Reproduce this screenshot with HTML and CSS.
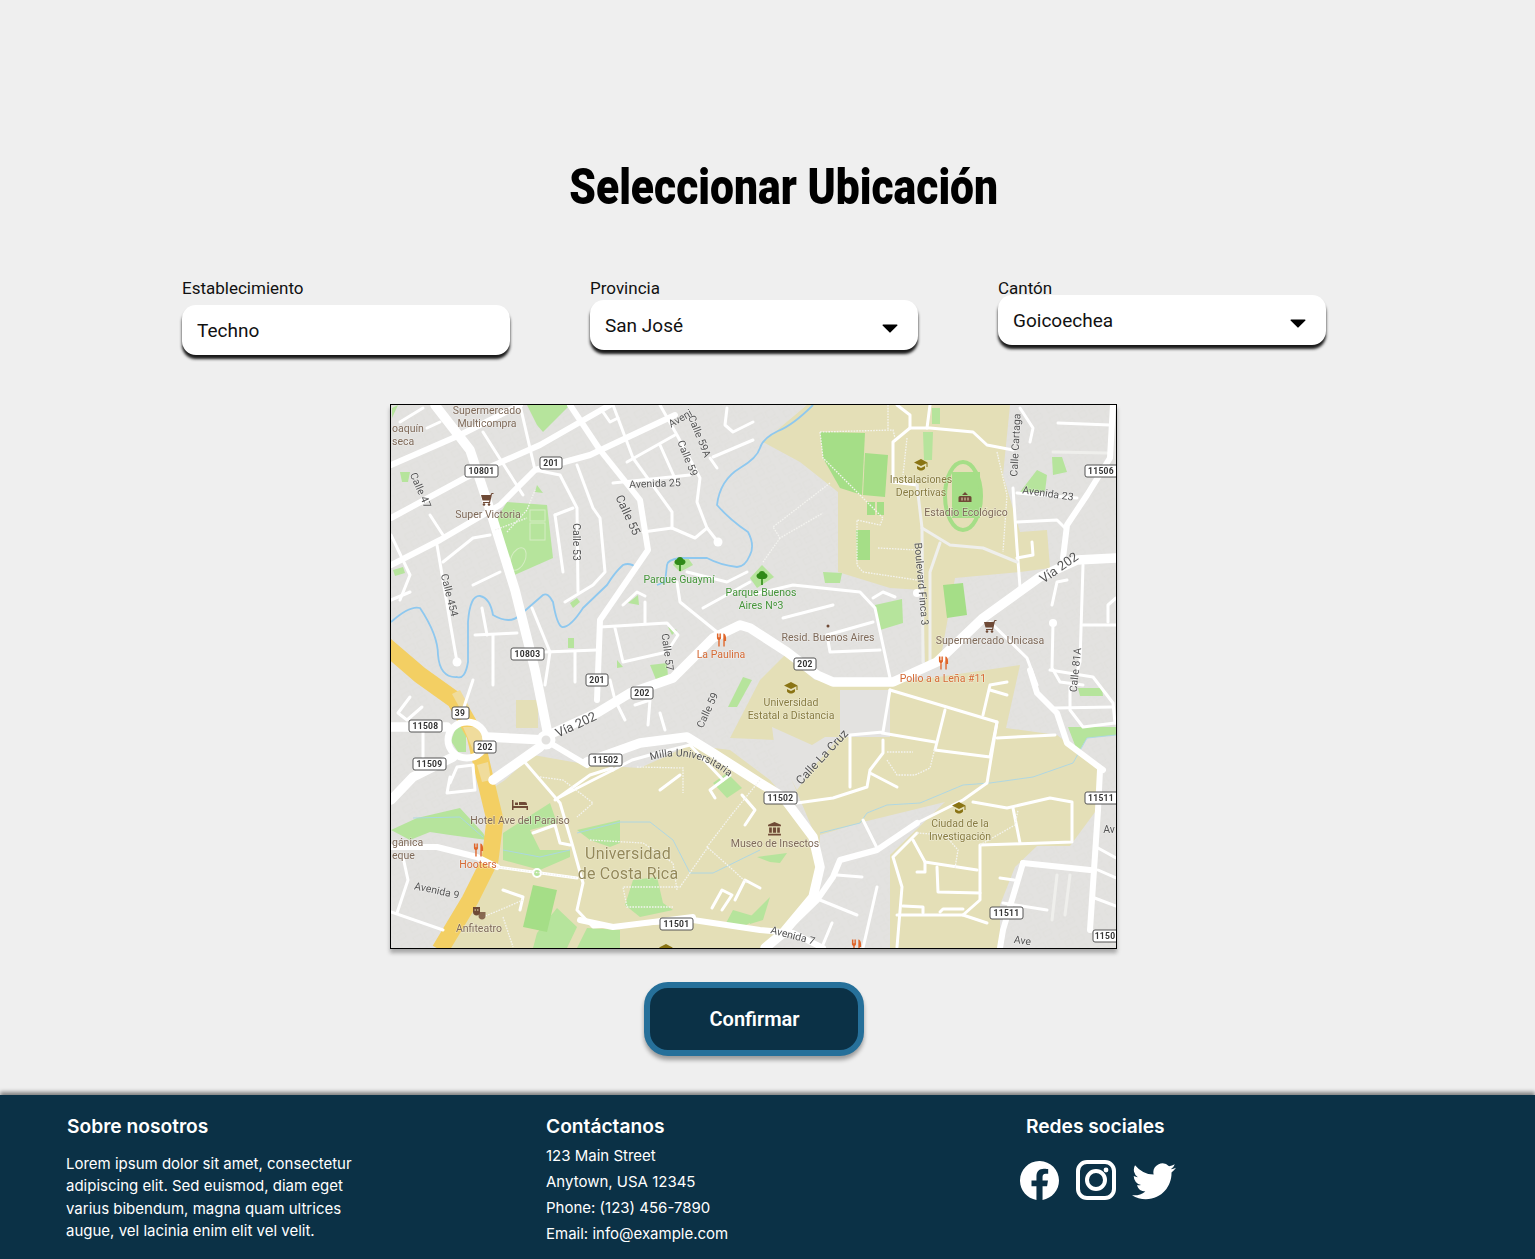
FILE: index.html
```html
<!DOCTYPE html>
<html lang="es">
<head>
    <meta charset="UTF-8">
    <meta name="viewport" content="width=device-width, initial-scale=1.0">
    <title>Seleccionar Ubicación</title>
    <link rel="stylesheet" href="styles.css">
</head>
<body>

    <main class="page">
        <h1 class="page-title"><span>Seleccionar Ubicación</span></h1>

        <div class="fields">
            <div class="field">
                <label class="field-label gap-lg" for="establecimiento">Establecimiento</label>
                <input class="box" id="establecimiento" type="text" value="Techno">
            </div>
            <div class="field">
                <label class="field-label gap-md" for="provincia">Provincia</label>
                <div class="select-wrap">
                    <select class="box" id="provincia"><option>San José</option></select>
                    <svg class="arrow" viewBox="0 0 16 9"><path d="M1 0.5h14a.6.6 0 0 1 .4 1L8.6 8.3a.8.8 0 0 1-1.2 0L.6 1.5A.6.6 0 0 1 1 .5z"/></svg>
                </div>
            </div>
            <div class="field">
                <label class="field-label gap-sm" for="canton">Cantón</label>
                <div class="select-wrap">
                    <select class="box" id="canton"><option>Goicoechea</option></select>
                    <svg class="arrow" viewBox="0 0 16 9"><path d="M1 0.5h14a.6.6 0 0 1 .4 1L8.6 8.3a.8.8 0 0 1-1.2 0L.6 1.5A.6.6 0 0 1 1 .5z"/></svg>
                </div>
            </div>
        </div>

        <div class="stage">
            <div class="map">
                <svg class="map-svg" viewBox="391 405 725 543" width="725" height="543">
                    <defs>
                        <pattern id="blocks" width="26" height="20" patternUnits="userSpaceOnUse" patternTransform="rotate(-28)">
                            <rect x="2" y="2" width="9" height="6" class="bld"/>
                            <rect x="14" y="3" width="8" height="7" class="bld"/>
                            <rect x="4" y="11" width="7" height="6" class="bld"/>
                            <rect x="15" y="13" width="8" height="5" class="bld"/>
                        </pattern>
                        <symbol id="cart" viewBox="0 0 14 14"><path d="M13.5 1h-2l-1 2H1l1.500 5.500h7L9 10H3v1h7l2-9h1.500z"/><circle cx="4" cy="12.500" r="1.300"/><circle cx="9" cy="12.500" r="1.300"/></symbol>
                        <symbol id="tree" viewBox="0 0 14 14"><path d="M7 0C5 0 4 1.200 4 2.200 2.500 2.500 1.500 3.600 1.500 5c0 1.500 1.500 3 3.500 3h1.200v6h1.600V8H9c2 0 3.500-1.500 3.500-3 0-1.400-1-2.500-2.500-2.800C10 1.200 9 0 7 0z"/></symbol>
                        <symbol id="fork" viewBox="0 0 12 14"><path d="M1 0v4.500C1 6 2 6.800 2.500 7v7h1.500V7C4.500 6.800 5.500 6 5.500 4.500V0h-1v4h-.6V0h-1v4h-.6V0zM8 0c1.500 0 3 2 3 5v3H9.500v6H8z"/></symbol>
                        <symbol id="cap" viewBox="0 0 14 14"><path d="M7 1L0 4.500 7 8l5.500-2.800V9h1V4.500zM3 8v2.500C4 12 5.500 12.500 7 12.500s3-.5 4-2V8L7 10z"/></symbol>
                        <symbol id="stadium" viewBox="0 0 14 14"><path d="M7 1l3 3H4zM2 5h10a1.500 1.500 0 0 1 1.500 1.500V11H.5V6.500A1.500 1.500 0 0 1 2 5z"/><path d="M4 6.500v3M7 6.500v3M10 6.500v3" stroke="#e4dfb7"/></symbol>
                        <symbol id="museum" viewBox="0 0 14 14"><path d="M7 1L1 3.500V5h12V3.500zM2 6h2.500v5H2zM5.500 6h3v5h-3zM9.500 6H12v5H9.500zM1 12h12v1.500H1z"/></symbol>
                        <symbol id="bed" viewBox="0 0 16 12"><path d="M0 1h1.500v6H16v4h-1.500V9h-13v2H0zM3 3.500h3V6H3zM7 3h6a2 2 0 0 1 2 2v1H7z"/></symbol>
                        <symbol id="masks" viewBox="0 0 14 14"><path d="M1 1h7v5c0 2-1.500 3.500-3.500 3.500S1 8 1 6zM2.500 3.500v1h1.500v-1zM5 3.500v1h1.500v-1z"/><path d="M7 6h6.500v4C13.500 12 12 13.500 10 13.500S6.500 12 6.500 10z" fill-opacity=".8"/></symbol>
                    </defs>

                    <rect x="391" y="405" width="725" height="543" class="land"/>
                    <rect x="391" y="405" width="725" height="543" fill="url(#blocks)"/>

                    <!-- zonas beige -->
                    <g class="campus">
                        <polygon points="807,405 1010,405 1003,475 1020,532 1047,530 1050,568 1020,572 955,578 940,662 925,662 922,590 890,588 838,572 838,492 800,462 763,442"/>
                        <polygon points="730,738 760,680 785,655 815,680 890,684 1020,665 1006,728 1057,735 1100,768 1098,808 1070,846 1037,846 1015,867 1000,905 1000,948 890,948 890,855 945,802 863,822 820,835 817,900 783,933 770,948 440,948 490,860 497,820 490,790 505,780 533,755 590,765 640,768 690,745 730,750 770,780 800,815 815,835 775,740"/>
                        <polygon points="840,690 890,690 890,737 840,737" class="gray-patch"/>
                        <polygon points="772,727 812,745 825,737 840,737 815,765 797,790 775,750" class="gray-patch"/>
                        <rect x="516" y="700" width="22" height="28"/>
                    </g>

                    <!-- parques -->
                    <g class="park">
                        <polygon points="507,502 547,505 553,558 510,577 493,525"/>
                        <polygon points="527,405 570,405 560,415 543,432 537,425"/>
                        <polygon points="923,432 933,432 932,460 924,460"/>
                        <polygon points="932,408 940,408 940,424 932,424"/>
                        <polygon points="823,572 842,573 840,583 825,583"/>
                        <polygon points="1052,457 1062,457 1067,472 1053,475"/>
                        <polygon points="1020,492 1037,470 1047,475 1045,492"/>
                        <polygon points="875,605 902,599 903,623 880,630"/>
                        <polygon points="762,565 774,577 757,588 750,578"/>
                        <polygon points="391,830 417,818 460,808 483,833 487,840 450,835 430,832 410,840"/>
                        <polygon points="503,833 550,803 557,823 530,830 540,850 570,850 570,857 540,870 503,860"/>
                        <polygon points="577,830 620,820 620,843 610,847 590,840"/>
                        <polygon points="557,908 577,927 567,948 533,948 537,933"/>
                        <polygon points="587,928 620,930 620,948 577,948"/>
                        <polygon points="713,783 727,773 742,788 727,798"/>
                        <polygon points="633,880 657,877 663,903 673,910 640,917 625,905"/>
                        <polygon points="733,910 760,918 740,928 725,925"/>
                        <polygon points="743,677 752,680 737,707 728,707"/>
                        <polygon points="1068,727 1116,727 1116,735 1087,738 1078,753"/>
                        <polygon points="1078,688 1102,688 1103,696 1080,696"/>
                        <polygon points="757,857 787,853 780,863 770,862"/>
                        <polygon points="750,917 770,897 763,920 750,924"/>
                        <polygon points="400,472 410,472 408,482 402,482"/>
                        <polygon points="393,570 403,567 405,573 395,576"/>
                        <polygon points="537,485 543,493 535,492"/>
                        <rect x="568" y="638" width="6" height="10"/>
                        <polygon points="570,603 577,598 580,602 573,608"/>
                        <polygon points="628,603 638,595 639,605"/>
                        <polygon points="650,665 667,663 668,678 657,682"/>
                        <polygon points="617,660 623,667 617,668"/>
                        <polygon points="668,627 677,630 672,635"/>
                        <polygon points="677,558 688,558 693,565 680,572 673,565"/>
                        <polygon points="392,408 398,405 392,418"/>
                        <polygon points="456,727 466,727 466,752 458,752 451,741"/>
                    </g>
                    <g class="pitch">
                        <polygon points="820,432 865,433 862,495 840,488 823,458"/>
                        <polygon points="865,453 888,455 885,497 863,495"/>
                        <rect x="867" y="502" width="8" height="13"/>
                        <rect x="877" y="502" width="7" height="13"/>
                        <polygon points="856,530 870,530 870,560 857,560"/>
                        <polygon points="943,585 963,583 967,615 947,618"/>
                        <rect x="952" y="472" width="28" height="46"/>
                        <polygon points="533,885 557,890 547,932 523,927"/>
                    </g>
                    <ellipse cx="963" cy="496" rx="18" ry="34" class="track"/>
                    <g class="pitch-line">
                        <rect x="530" y="510" width="15" height="11"/>
                        <rect x="530" y="523" width="15" height="17"/>
                        <ellipse cx="518" cy="559" rx="7" ry="12" transform="rotate(25 518 559)"/>
                    </g>

                    <!-- rios -->
                    <g class="river">
                        <path d="M813 405Q793 425 778 431Q763 438 760 448Q757 458 740 468Q720 480 717 505Q730 520 748 532Q755 545 750 555Q745 567 737 567Q720 565 707 558L680 558Q667 560 667 565L665 582L657 585"/>
                        <path d="M637 568Q630 562 623 565Q615 572 607 585L583 608Q570 628 562 627Q557 625 553 602Q548 592 543 595L520 615Q510 625 493 615Q490 598 480 596Q470 595 468 622L468 662Q465 680 457 677Q440 678 438 655Q438 635 420 608Q410 605 391 622"/>
                    </g>
                    <g class="stream">
                        <polyline points="413,818 460,817 483,837"/>
                        <polyline points="503,850 540,857 570,850"/>
                        <polyline points="577,833 620,822 650,822 673,840 690,873 713,873 760,850"/>
                        <polyline points="820,833 860,823 867,813 887,805 920,803 963,785 990,783 1033,777 1073,763 1087,738 1116,735"/>
                    </g>

                    <!-- autopista -->
                    <polyline class="highway" points="385,645 420,675 455,700 475,735 483,770 495,820 490,860 470,900 440,950"/>
                    <polygon class="highway-light" points="452,694 460,690 470,708 462,712"/>
                    <polygon class="highway-light" points="463,727 482,727 490,752 476,757"/>
                    <polygon class="highway-light" points="477,765 488,762 491,780 482,782"/>

                    <!-- caminos secundarios -->
                    <g class="road-s">
                        <polyline points="520,405 535,470 560,475 577,508 578,592"/>
                        <polyline points="577,465 593,508 600,518 605,572 593,585 565,602"/>
                        <polyline points="555,515 573,508"/>
                        <polyline points="555,515 563,572"/>
                        <polyline points="443,562 473,538 490,535"/>
                        <polyline points="473,585 500,572"/>
                        <polyline points="437,545 450,622 457,662"/>
                        <polyline points="430,515 443,535"/>
                        <polyline points="391,535 410,575 400,600"/>
                        <polyline points="410,592 391,600"/>
                        <polyline points="483,432 523,495"/>
                        <polyline points="400,422 423,408"/>
                        <polyline points="427,428 440,422"/>
                        <polyline points="475,635 517,633"/>
                        <polyline points="482,608 487,635"/>
                        <polyline points="493,635 493,685"/>
                        <polyline points="532,608 550,652 545,685"/>
                        <polyline points="545,652 597,650"/>
                        <polyline points="575,652 575,682"/>
                        <polyline points="600,627 667,623 678,635 667,652 623,662 615,628"/>
                        <polyline points="645,602 645,623"/>
                        <polyline points="623,605 637,592 645,596"/>
                        <polyline points="643,532 672,528 695,538 707,528 718,542"/>
                        <polyline points="672,528 672,512 633,458 613,405"/>
                        <polyline points="707,528 697,502 700,478 677,435 660,405"/>
                        <polyline points="613,483 690,475"/>
                        <polyline points="627,462 675,435"/>
                        <polyline points="713,457 753,440"/>
                        <polyline points="710,458 717,468"/>
                        <polyline points="660,445 677,483"/>
                        <polyline points="727,408 725,425 733,432 753,422"/>
                        <polyline points="603,412 610,422 618,418"/>
                        <polyline points="677,582 680,602 717,632"/>
                        <polyline points="703,608 750,582"/>
                        <polyline points="687,572 727,582 747,572"/>
                        <polyline points="783,618 833,605"/>
                        <polyline points="750,595 793,585 860,592 875,608 890,678"/>
                        <polyline points="873,598 883,592 895,597"/>
                        <polyline points="827,635 830,652 880,650"/>
                        <polyline points="827,635 873,622"/>
                        <polyline points="897,405 910,415 910,428 930,428 973,432 987,445 1013,450"/>
                        <polyline points="910,428 893,442 893,482 917,485"/>
                        <polyline points="930,405 927,428"/>
                        <polyline points="1013,488 1017,548 1020,587"/>
                        <polyline points="1017,522 1057,520 1065,528"/>
                        <polyline points="1017,558 1033,555 1032,542"/>
                        <polyline points="1017,493 1077,498"/>
                        <polyline points="1020,408 1033,428 1030,442"/>
                        <polyline points="1058,423 1110,425"/>
                        <polyline points="1053,623 1052,668 1060,682 1083,685"/>
                        <polyline points="1083,625 1116,625"/>
                        <polyline points="1108,622 1108,605 1116,598"/>
                        <polyline points="1052,605 1057,582 1067,580"/>
                        <polyline points="1083,565 1080,662 1073,685"/>
                        <polyline points="1070,687 1070,710 1083,727 1115,723"/>
                        <polyline points="1050,670 1093,677 1113,703 1115,723"/>
                        <polyline points="1055,708 1113,707"/>
                        <polyline points="990,622 1027,658 1037,685"/>
                        <polyline points="890,690 997,722 990,757 935,750 945,710"/>
                        <polyline points="997,722 987,783 963,800 917,823"/>
                        <polyline points="882,733 935,742"/>
                        <polyline points="890,690 883,732 850,735 850,787"/>
                        <polyline points="997,738 1055,735"/>
                        <polyline points="983,715 990,685 1007,682"/>
                        <polyline points="990,690 1007,695"/>
                        <polyline points="883,740 883,753 870,770 867,787 833,798 797,803"/>
                        <polyline points="870,773 897,787"/>
                        <polyline points="973,802 1007,808 1050,798 1072,802 1072,842 980,845 980,900 963,915 897,915"/>
                        <polyline points="1013,808 1020,843"/>
                        <polyline points="917,833 893,857 902,887 897,947"/>
                        <polyline points="963,915 987,923"/>
                        <polyline points="937,867 938,892 980,893"/>
                        <polyline points="925,862 977,870"/>
                        <polyline points="913,840 925,862 925,872 917,872"/>
                        <polyline points="940,912 943,909 963,909"/>
                        <polyline points="903,906 923,907 923,913"/>
                        <polyline points="863,820 878,850"/>
                        <polyline points="837,875 862,877"/>
                        <polyline points="820,900 857,915"/>
                        <polyline points="877,887 863,948"/>
                        <polyline points="832,923 822,947"/>
                        <polyline points="1098,848 1116,858"/>
                        <polyline points="1098,870 1116,878"/>
                        <polyline points="1092,897 1116,906"/>
                        <polyline points="1003,903 1047,910"/>
                        <polyline points="1000,878 1014,880"/>
                        <polyline points="410,697 398,713 407,720 422,707"/>
                        <polyline points="423,730 423,757"/>
                        <polyline points="450,777 447,793 475,790 473,765 457,767 450,783"/>
                        <polyline points="473,680 463,710"/>
                        <polyline points="403,857 408,880 397,913"/>
                        <polyline points="391,912 443,930"/>
                        <polyline points="523,760 560,803 573,847 583,883 577,910 593,927 660,923"/>
                        <polyline points="560,797 593,780 613,770"/>
                        <polyline points="555,800 590,775 612,768"/>
                        <polyline points="533,833 555,825 560,843 570,845"/>
                        <polyline points="503,890 523,897 520,910"/>
                        <polyline points="497,867 577,878"/>
                        <polyline points="613,770 632,760 650,755 690,745"/>
                        <polyline points="610,680 615,700 625,720"/>
                        <polyline points="635,705 650,700 648,725"/>
                        <polyline points="660,713 665,730"/>
                        <polyline points="680,775 660,790"/>
                        <polyline points="715,798 710,790 730,775"/>
                        <polyline points="723,780 690,745"/>
                        <polyline points="742,795 755,810 745,825"/>
                        <polyline points="735,900 745,880 760,888"/>
                        <polyline points="712,908 722,890 732,895 722,910"/>
                    </g>
                    <g class="road-soft">
                        <polyline points="917,485 922,528 923,662"/>
                        <polyline points="922,528 950,545 983,548 1017,562"/>
                        <polyline points="940,543 930,572 930,662"/>
                        <polyline points="1053,452 1107,453"/>
                        <polyline points="1057,875 1052,920"/>
                        <polyline points="1070,875 1065,915"/>
                    </g>
                    <circle cx="718" cy="542" r="4.500" class="dot"/>
                    <circle cx="457" cy="662" r="4.500" class="dot"/>
                    <circle cx="917" cy="593" r="4" class="dot"/>
                    <circle cx="1053" cy="623" r="4" class="dot"/>
                    <circle cx="537" cy="873" r="4" class="ring-sm"/>

                    <!-- caminos principales -->
                    <g class="road-m">
                        <polyline points="391,465 460,435 520,405"/>
                        <polyline points="391,518 465,478 540,445 610,405"/>
                        <polyline points="391,565 440,540 500,505 535,470 590,455 675,415"/>
                        <polyline points="570,405 600,450 640,500 648,550 600,620 597,700"/>
                        <polyline points="1113,405 1110,458 1087,495 1067,525 1063,558"/>
                        <polyline points="1100,770 1098,810 1090,930"/>
                        <polyline points="1023,863 1090,870"/>
                        <polyline points="1023,863 1003,930 1000,948"/>
                        <polyline points="1030,670 1037,693 1057,713 1067,743 1103,770"/>
                        <polyline points="917,823 877,850 840,860 833,877 817,900 783,933"/>
                        <polyline points="391,847 437,847 477,857 497,867"/>
                        <polyline points="693,920 760,930 793,933 823,948"/>
                        <polyline points="580,920 613,927 693,917"/>
                        <polyline points="545,740 587,765"/>
                    </g>
                    <g class="road-l">
                        <polyline points="435,405 470,450 490,510 515,590 535,670 548,735"/>
                        <polyline points="1116,558 1077,560 1040,577 983,618 937,662 893,682 833,682 817,675 787,652 750,628 740,625 713,638 673,678 630,693 597,713 553,733 545,740 487,737"/>
                        <polyline points="587,762 640,743 687,737 713,753 760,783 783,797 813,837 820,867 813,897 783,933 765,948"/>
                        <polyline points="540,747 493,780"/>
                        <polyline points="391,800 413,777 453,757"/>
                        <polyline points="391,727 447,727"/>
                    </g>
                    <ellipse cx="467" cy="740" rx="19" ry="18" class="ring"/>
                    <circle cx="546" cy="740" r="7" class="ring-md"/>

                    <!-- senderos -->
                    <g class="trail">
                        <polyline points="820,432 893,430 895,438"/>
                        <polyline points="820,432 823,458 862,497 867,502 883,518 880,525 857,520 857,565 863,572 917,580"/>
                        <polyline points="830,483 773,527 780,538 823,513"/>
                        <polyline points="780,538 763,562"/>
                        <polyline points="878,548 917,550"/>
                        <polyline points="997,452 1007,495 1003,552"/>
                        <polyline points="907,438 903,475"/>
                        <polyline points="888,405 888,430"/>
                        <polyline points="637,767 683,768 683,793"/>
                        <polyline points="540,777 563,780 580,793 593,803 577,817"/>
                        <polyline points="760,780 733,813 707,847 733,870 747,883"/>
                        <polyline points="708,847 680,887 623,887 627,907 673,907"/>
                        <polyline points="590,840 643,843 673,863 677,890"/>
                        <polyline points="483,917 507,907 523,900"/>
                        <polyline points="503,917 513,947"/>
                        <polyline points="497,867 577,878"/>
                        <polyline points="507,532 527,510 535,490"/>
                        <polyline points="495,530 527,518"/>
                        <polyline points="887,752 913,752"/>
                        <polyline points="887,760 897,775 915,775 930,768 935,748"/>
                        <polyline points="917,833 945,835 958,850 955,868"/>
                        <polyline points="980,845 1015,825 1018,810"/>
                    </g>

                    <!-- iconos -->
                    <g class="ic-brown">
                        <use href="#cart" x="480" y="492" width="14" height="14"/>
                        <use href="#cart" x="983" y="619" width="14" height="14"/>
                        <use href="#stadium" x="958" y="491" width="14" height="14"/>
                        <use href="#museum" x="767" y="821" width="15" height="15"/>
                        <use href="#bed" x="512" y="799" width="16" height="12"/>
                        <use href="#masks" x="472" y="906" width="14" height="14"/>
                    </g>
                    <g class="ic-green">
                        <use href="#tree" x="673" y="557" width="14" height="14"/>
                        <use href="#tree" x="755" y="571" width="14" height="14"/>
                    </g>
                    <g class="ic-orange">
                        <use href="#fork" x="716" y="633" width="11" height="14"/>
                        <use href="#fork" x="938" y="656" width="11" height="14"/>
                        <use href="#fork" x="473" y="843" width="11" height="14"/>
                        <use href="#fork" x="851" y="939" width="11" height="14"/>
                    </g>
                    <g class="ic-olive">
                        <use href="#cap" x="914" y="458" width="14" height="14"/>
                        <use href="#cap" x="784" y="681" width="14" height="14"/>
                        <use href="#cap" x="952" y="801" width="14" height="14"/>
                        <use href="#cap" x="659" y="943" width="14" height="14"/>
                    </g>
                    <circle cx="828" cy="626" r="1.500" class="fill-brown"/>

                    <!-- nombres -->
                    <g class="lb lb-brown">
                        <text x="487" y="414">Supermercado</text>
                        <text x="487" y="427">Multicompra</text>
                        <text x="392" y="432" class="lb-left">oaquín</text>
                        <text x="392" y="445" class="lb-left">seca</text>
                        <text x="488" y="518">Super Victoria</text>
                        <text x="828" y="641">Resid. Buenos Aires</text>
                        <text x="966" y="516">Estadio Ecológico</text>
                        <text x="990" y="644">Supermercado Unicasa</text>
                        <text x="520" y="824">Hotel Ave del Paraíso</text>
                        <text x="775" y="847">Museo de Insectos</text>
                        <text x="392" y="846" class="lb-left">gánica</text>
                        <text x="392" y="859" class="lb-left">eque</text>
                        <text x="479" y="932">Anfiteatro</text>
                    </g>
                    <g class="lb lb-green">
                        <text x="679" y="583">Parque Guaymí</text>
                        <text x="761" y="596">Parque Buenos</text>
                        <text x="761" y="609">Aires Nº3</text>
                    </g>
                    <g class="lb lb-orange">
                        <text x="721" y="658">La Paulina</text>
                        <text x="943" y="682">Pollo a a Leña #11</text>
                        <text x="478" y="868">Hooters</text>
                    </g>
                    <g class="lb lb-olive">
                        <text x="921" y="483">Instalaciones</text>
                        <text x="921" y="496">Deportivas</text>
                        <text x="791" y="706">Universidad</text>
                        <text x="791" y="719">Estatal a Distancia</text>
                        <text x="960" y="827">Ciudad de la</text>
                        <text x="960" y="840">Investigación</text>
                        <text x="628" y="859" class="lb-big">Universidad</text>
                        <text x="628" y="879" class="lb-big">de Costa Rica</text>
                    </g>
                    <g class="lb lb-street">
                        <text transform="translate(421 490) rotate(66)" y="4">Calle 47</text>
                        <text transform="translate(450 595) rotate(76)" y="4">Calle 454</text>
                        <text transform="translate(577 542) rotate(90)" y="4">Calle 53</text>
                        <text transform="translate(628 515) rotate(65)" y="4" class="lb-mid">Calle 55</text>
                        <text transform="translate(655 483) rotate(-2)" y="4">Avenida 25</text>
                        <text transform="translate(700 436) rotate(68)" y="4">Calle 59A</text>
                        <text transform="translate(688 458) rotate(68)" y="4">Calle 59</text>
                        <text transform="translate(680 418) rotate(-30)" y="4">Aveni</text>
                        <text transform="translate(668 652) rotate(82)" y="4">Calle 57</text>
                        <text transform="translate(1015 445) rotate(-87)" y="4">Calle Cartaga</text>
                        <text transform="translate(1048 493) rotate(8)" y="4">Avenida 23</text>
                        <text transform="translate(922 584) rotate(85)" y="4">Boulevard Finca 3</text>
                        <text transform="translate(1075 670) rotate(-84)" y="4">Calle 81A</text>
                        <text transform="translate(707 710) rotate(-65)" y="4">Calle 59</text>
                        <text transform="translate(822 757) rotate(-47)" y="4" class="lb-mid">Calle La Cruz</text>
                        <text transform="translate(437 890) rotate(12)" y="4">Avenida 9</text>
                        <text transform="translate(793 935) rotate(15)" y="4">Avenida 7</text>
                        <text x="1109" y="833">Av</text>
                        <text transform="translate(1022 944) rotate(8)">Ave</text>
                        <text transform="translate(1059 568) rotate(-35)" y="4" class="lb-via">Vía 202</text>
                        <text transform="translate(576 725) rotate(-25)" y="4" class="lb-via">Vía 202</text>
                        <path id="milla" d="M652 760C680 752 705 757 728 776" fill="none"/>
                        <text><textPath href="#milla" startOffset="50%">Milla Universitaria</textPath></text>
                    </g>

                    <!-- placas -->
                    <g class="shield">
                        <rect x="465" y="465" width="33" height="12"/><text x="481.500" y="474">10801</text>
                        <rect x="540" y="457" width="22" height="12"/><text x="551" y="466">201</text>
                        <rect x="511" y="648" width="33" height="12"/><text x="527.500" y="657">10803</text>
                        <rect x="586" y="674" width="22" height="12"/><text x="597" y="683">201</text>
                        <rect x="631" y="687" width="22" height="12"/><text x="642" y="696">202</text>
                        <rect x="794" y="658" width="22" height="12"/><text x="805" y="667">202</text>
                        <rect x="1085" y="465" width="33" height="12"/><text x="1101" y="474">11506</text>
                        <rect x="452" y="707" width="17" height="12"/><text x="460" y="716">39</text>
                        <rect x="409" y="720" width="33" height="12"/><text x="425.500" y="729">11508</text>
                        <rect x="413" y="758" width="33" height="12"/><text x="429.500" y="767">11509</text>
                        <rect x="474" y="741" width="22" height="12"/><text x="485" y="750">202</text>
                        <rect x="589" y="754" width="33" height="12"/><text x="605.500" y="763">11502</text>
                        <rect x="764" y="792" width="33" height="12"/><text x="780.500" y="801">11502</text>
                        <rect x="1085" y="792" width="33" height="12"/><text x="1101" y="801">11511</text>
                        <rect x="990" y="907" width="33" height="12"/><text x="1006.500" y="916">11511</text>
                        <rect x="660" y="918" width="33" height="12"/><text x="676.500" y="927">11501</text>
                        <rect x="1093" y="930" width="33" height="12"/><text x="1105" y="939">1150</text>
                    </g>
                </svg>
            </div>

            <button class="confirm" type="button">Confirmar</button>
        </div>
    </main>

    <footer class="footer">
        <div class="col col-about">
            <h2 class="col-title">Sobre nosotros</h2>
            <p class="about-text">Lorem ipsum dolor sit amet, consectetur adipiscing elit. Sed euismod, diam eget varius bibendum, magna quam ultrices augue, vel lacinia enim elit vel velit.</p>
        </div>
        <div class="col col-contact">
            <h2 class="col-title">Contáctanos</h2>
            <p class="contact-line">123 Main Street</p>
            <p class="contact-line">Anytown, USA 12345</p>
            <p class="contact-line">Phone: (123) 456-7890</p>
            <p class="contact-line">Email: info@example.com</p>
        </div>
        <div class="col col-social">
            <h2 class="col-title social-title">Redes sociales</h2>
            <div class="social-icons">
                <svg class="icon-fb" viewBox="0 0 16 16"><path d="M16 8.049c0-4.446-3.582-8.05-8-8.05C3.58 0-.002 3.603-.002 8.05c0 4.017 2.926 7.347 6.75 7.951v-5.625h-2.03V8.05H6.75V6.275c0-2.017 1.195-3.131 3.022-3.131.876 0 1.791.157 1.791.157v1.98h-1.009c-.993 0-1.303.621-1.303 1.258v1.51h2.218l-.354 2.326H9.25V16c3.824-.604 6.75-3.934 6.75-7.951z"/></svg>
                <svg class="icon-ig" viewBox="0 0 40 40"><rect x="2" y="2" width="36" height="36" rx="9"/><circle cx="20" cy="20" r="9"/><circle class="ig-dot" cx="30" cy="10" r="2.400"/></svg>
                <svg class="icon-tw" viewBox="0 0 16 16"><path d="M5.026 15c6.038 0 9.341-5.003 9.341-9.334 0-.14 0-.282-.006-.422A6.685 6.685 0 0 0 16 3.542a6.658 6.658 0 0 1-1.889.518 3.301 3.301 0 0 0 1.447-1.817 6.533 6.533 0 0 1-2.087.793A3.286 3.286 0 0 0 7.875 6.03a9.325 9.325 0 0 1-6.767-3.429 3.289 3.289 0 0 0 1.018 4.382A3.323 3.323 0 0 1 .64 6.575v.045a3.288 3.288 0 0 0 2.632 3.218 3.203 3.203 0 0 1-.865.115 3.23 3.23 0 0 1-.614-.057 3.283 3.283 0 0 0 3.067 2.277A6.588 6.588 0 0 1 .78 13.58a6.32 6.32 0 0 1-.78-.045A9.344 9.344 0 0 0 5.026 15z"/></svg>
            </div>
        </div>
    </footer>

</body>
</html>
```
FILE: styles.css
```css
* {
    margin: 0;
    padding: 0;
    box-sizing: border-box;
}

body {
    font-family: Roboto, sans-serif;
    background: #efefef;
    color: #000;
}

.page {
    height: 1095px;
    padding-top: 158px;
}

.page-title {
    margin-left: 33px;
    text-align: center;
    font-family: Roboto, sans-serif;
    font-size: 50px;
    line-height: 58px;
    font-weight: 900;
}

.page-title span {
    display: inline-block;
    transform: scaleX(0.852);
}

/* Campos de arriba */
.fields {
    display: flex;
    gap: 80px;
    padding-left: 182px;
    margin-top: 63px;
    height: 125px;
}

.field {
    width: 328px;
}

.field-label {
    display: block;
    font-size: 17px;
    line-height: 18px;
    color: #111;
}

.gap-lg { margin-bottom: 8px; }
.gap-md { margin-bottom: 3px; }
.gap-sm { margin-bottom: -2px; }

.box {
    display: block;
    width: 100%;
    height: 50px;
    padding: 0 15px;
    border: none;
    border-radius: 14px;
    background: #fff;
    font-family: Roboto, sans-serif;
    font-size: 19px;
    color: #111;
    box-shadow: 0 4px 3px rgba(0, 0, 0, 0.9);
    appearance: none;
}

.select-wrap {
    position: relative;
}

.arrow {
    position: absolute;
    right: 20px;
    top: 24px;
    width: 16px;
    height: 9px;
    fill: #000;
}

/* Mapa */
.stage {
    display: flex;
    flex-direction: column;
    align-items: center;
    padding-right: 28px;
}

.map {
    width: 727px;
    height: 545px;
    border: 1px solid #000;
    box-shadow: 0 4px 4px rgba(0, 0, 0, 0.3);
    overflow: hidden;
}

.map-svg {
    display: block;
    filter: blur(0.45px);
}

.land { fill: #e3e2e0; }
.bld { fill: none; stroke: #dededb; stroke-width: 0.7; }
.campus polygon, .campus rect { fill: #e4dfb7; }
.campus .gray-patch { fill: #e3e2e0; }
.park polygon, .park rect { fill: #b6e49c; }
.pitch polygon, .pitch rect { fill: #a5de87; }
.pitch-line rect, .pitch-line ellipse { fill: #b6e49c; stroke: #d5ecc3; stroke-width: 1; }
.track { fill: none; stroke: #a5de87; stroke-width: 4; }

.river path { fill: none; stroke: #8ec8ef; stroke-width: 1.8; stroke-linejoin: round; }
.stream polyline { fill: none; stroke: #a9d6e6; stroke-width: 0.9; }

.highway { fill: none; stroke: #f3cf63; stroke-width: 17; stroke-linejoin: round; }
.highway-light { fill: #f0dc9c; }

.road-s polyline, .road-m polyline, .road-l polyline, .road-soft polyline {
    fill: none;
    stroke-linejoin: round;
    stroke-linecap: round;
}
.road-s polyline { stroke: #fff; stroke-width: 3; }
.road-soft polyline { stroke: #efefec; stroke-width: 3; }
.road-m polyline { stroke: #fff; stroke-width: 6; }
.road-l polyline { stroke: #fff; stroke-width: 9.5; }
.dot { fill: #fff; }
.ring { fill: none; stroke: #fff; stroke-width: 7; }
.ring-md { fill: #e3e2e0; stroke: #fff; stroke-width: 5; }
.ring-sm { fill: #b6e49c; stroke: #fff; stroke-width: 2; }
.trail polyline { fill: none; stroke: #f4f4f0; stroke-width: 1.3; stroke-dasharray: 1.6 1.2; }

.ic-brown { fill: #6f4a36; }
.ic-green { fill: #2f8a17; }
.ic-orange { fill: #e0662a; }
.ic-olive { fill: #8a7414; }
.fill-brown { fill: #6f4a36; }

.lb text {
    font-family: Roboto, sans-serif;
    font-size: 10.5px;
    text-anchor: middle;
    paint-order: stroke;
    stroke: rgba(255, 255, 255, 0.4);
    stroke-width: 1.2px;
}
.lb text.lb-left { text-anchor: start; }
.lb-brown text { fill: #7f6a59; }
.lb-green text { fill: #45953a; }
.lb-orange text { fill: #d56a35; }
.lb-olive text { fill: #877b40; }
.lb-street text { fill: #555; }
.lb text.lb-big { font-size: 16px; fill: #94895a; letter-spacing: 0.2px; }
.lb text.lb-via { font-size: 13px; fill: #555; }
.lb text.lb-mid { font-size: 12px; }

.shield rect { fill: #fff; stroke: #555; stroke-width: 1; rx: 2px; }
.shield text {
    font-family: Roboto, sans-serif;
    font-size: 8.5px;
    font-weight: 700;
    fill: #333;
    text-anchor: middle;
    letter-spacing: 0.3px;
}

.confirm {
    display: block;
    width: 220px;
    height: 74px;
    margin-top: 33px;
    padding-left: 2px;
    border: 6px solid #26709a;
    border-radius: 24px;
    background: #0b3146;
    color: #fff;
    font-family: Roboto, sans-serif;
    font-size: 20px;
    font-weight: 600;
    box-shadow: 0 4px 4px rgba(0, 0, 0, 0.35);
    cursor: pointer;
}

/* Pie de pagina */
.footer {
    display: flex;
    height: 164px;
    padding-top: 20px;
    background: #0b3146;
    color: #fff;
    font-family: Inter, sans-serif;
    box-shadow: 0 -3px 4px rgba(0, 0, 0, 0.45);
    position: relative;
}

.col-title {
    font-size: 19.2px;
    line-height: 22px;
    font-weight: 600;
}

.col-about {
    width: 546px;
    padding-left: 66px;
}

.col-about .col-title {
    padding-left: 1px;
}

.about-text {
    width: 300px;
    margin-top: 16px;
    font-size: 15px;
    line-height: 22.3px;
}

.col-contact {
    width: 474px;
}

.contact-line {
    font-size: 15px;
    line-height: 26px;
}

.col-contact .col-title {
    margin-bottom: 6px;
}

.social-title {
    padding-left: 6px;
}

.social-icons {
    display: flex;
    align-items: center;
    gap: 17px;
    margin-top: 21px;
}

.icon-fb { width: 39px; height: 39px; fill: #fff; }
.icon-ig { width: 40px; height: 40px; fill: none; stroke: #fff; stroke-width: 4; }
.icon-ig .ig-dot { fill: #fff; stroke: none; }
.icon-tw { width: 44px; height: 44px; fill: #fff; margin-left: -1px; }
```
